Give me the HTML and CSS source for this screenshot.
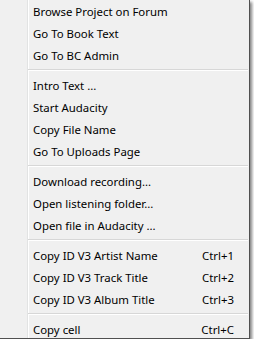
FILE: index.html
```html
<!DOCTYPE html>
<html lang="en">
<head>
    <meta charset="UTF-8">
    <meta name="viewport" content="width=device-width, initial-scale=1.0">
    <title>Context Menu</title>
    <link rel="stylesheet" href="styles.css">
</head>
<body>
    <div class="menu">
        <div class="item"><span class="label">Browse Project on Forum</span></div>
        <div class="item"><span class="label">Go To Book Text</span></div>
        <div class="item"><span class="label">Go To BC Admin</span></div>
        <div class="sep"></div>

        <div class="item"><span class="label">Intro Text ...</span></div>
        <div class="item"><span class="label">Start Audacity</span></div>
        <div class="item"><span class="label">Copy File Name</span></div>
        <div class="item"><span class="label">Go To Uploads Page</span></div>
        <div class="sep"></div>

        <div class="item"><span class="label">Download recording...</span></div>
        <div class="item"><span class="label">Open listening folder...</span></div>
        <div class="item"><span class="label">Open file in Audacity ...</span></div>
        <div class="sep"></div>

        <div class="item"><span class="label">Copy ID V3 Artist Name</span><span class="key">Ctrl+1</span></div>
        <div class="item"><span class="label">Copy ID V3 Track Title</span><span class="key">Ctrl+2</span></div>
        <div class="item"><span class="label">Copy ID V3 Album Title</span><span class="key">Ctrl+3</span></div>
        <div class="sep"></div>

        <div class="item"><span class="label">Copy cell</span><span class="key">Ctrl+C</span></div>
    </div>
</body>
</html>
```

FILE: styles.css
```css
body {
    margin: 0;
    background: #ffffff;
    font-family: "Noto Sans", "Open Sans", sans-serif;
    font-size: 11.4px;
    color: #000;
}
.menu {
    position: relative;
    width: 249px;
    height: 338px;
    background: #f0f0f0;
    border-right: 1px solid #505050;
    border-bottom: 1px solid #505050;
    box-shadow: 2px 2px 3px rgba(0, 0, 0, 0.5);
    background-image: linear-gradient(to right, transparent 27px, #e2e3e3 27px, #e2e3e3 28px, #ffffff 28px, #ffffff 29px, transparent 29px);
}
.item {
    display: flex;
    align-items: center;
    height: 22px;
    padding-left: 33px;
    padding-right: 15px;
}
.label {
    flex: 1;
    white-space: nowrap;
}
.key {
    white-space: nowrap;
}
.sep {
    height: 8px;
    margin-left: 28px;
    margin-right: 1px;
    display: flex;
    flex-direction: column;
    justify-content: center;
}
.sep::before {
    content: "";
    display: block;
    height: 1px;
    background: #d7d7d7;
    border-bottom: 1px solid #ffffff;
}
```
